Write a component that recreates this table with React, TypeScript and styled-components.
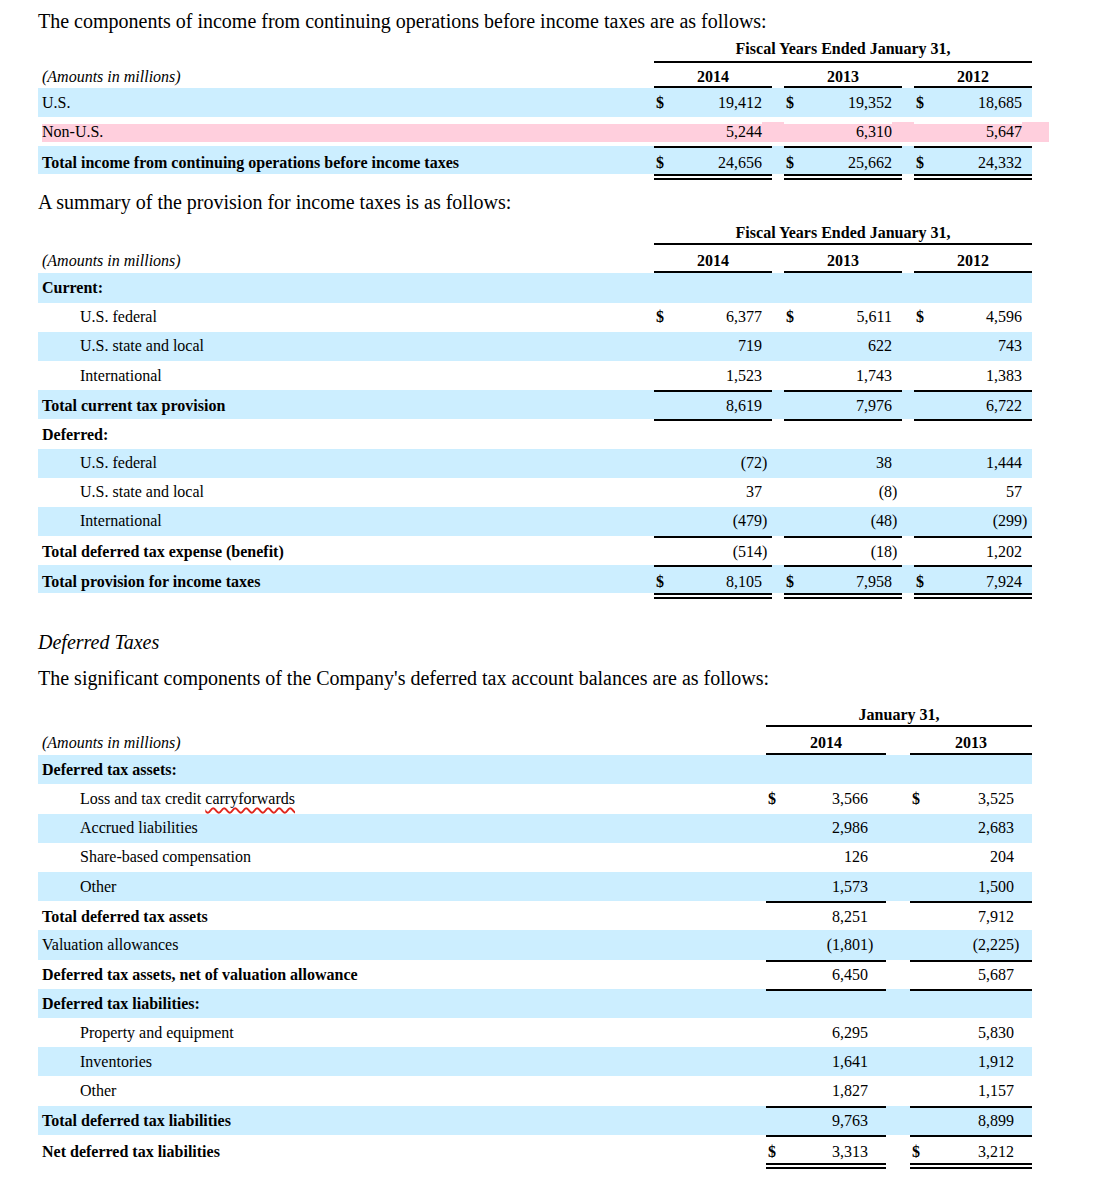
import React from 'react';
import styled, { createGlobalStyle } from 'styled-components';

const BLUE = '#CCEEFF';
const PINK = '#FFCFDD';

const GlobalStyle = createGlobalStyle`
  html, body { margin: 0; padding: 0; background: #fff; }
  body { font-family: "Liberation Serif", "Times New Roman", serif; color: #000; }
`;

const Page = styled.main`
  padding: 9px 0 18px 38px;
  width: 1080px;
`;

const Lead = styled.p<{ $top: number }>`
  margin: ${(p) => p.$top}px 0 0;
  font-size: 20px;
  line-height: 24px;
`;

const SectionTitle = styled(Lead)`
  font-style: italic;
`;

const FinTable = styled.table<{ $width: number; $top: number }>`
  border-collapse: separate;
  border-spacing: 0;
  table-layout: fixed;
  width: ${(p) => p.$width}px;
  margin-top: ${(p) => p.$top}px;
  font-size: 16px;
  line-height: 18px;
`;

const Col = styled.col<{ $w: number }>`
  width: ${(p) => p.$w}px;
`;

const Row = styled.tr<{ $h: number }>`
  height: ${(p) => p.$h}px;
`;

type Tone = 'blue' | 'white' | 'pink';
type Kind = 'label' | 'dollar' | 'value' | 'paren' | 'gap' | 'tail';

const isGroup = (k: Kind) => k === 'dollar' || k === 'value' || k === 'paren';
const isBump = (k: Kind) => k === 'gap' || k === 'tail' || k === 'paren';

const Cell = styled.td<{
  $tone: Tone;
  $kind: Kind;
  $top?: boolean;
  $double?: boolean;
  $indent?: boolean;
  $bold?: boolean;
}>`
  box-sizing: border-box;
  padding: ${(p) => (p.$double ? 4 : 0)}px 0 0;
  padding-left: ${(p) => (p.$kind === 'label' ? (p.$indent ? 42 : 4) : p.$kind === 'dollar' ? 2 : 0)}px;
  vertical-align: middle;
  white-space: nowrap;
  font-weight: ${(p) => (p.$bold || p.$kind === 'dollar' ? 700 : 400)};
  text-align: ${(p) => (p.$kind === 'value' ? 'right' : 'left')};
  border-top: ${(p) => (p.$top ? `2px solid ${isGroup(p.$kind) ? '#000' : 'transparent'}` : '0')};
  border-bottom: ${(p) => (p.$double ? `6px double ${isGroup(p.$kind) ? '#000' : 'transparent'}` : '0')};
  background-origin: border-box;
  background-clip: border-box;
  background-repeat: no-repeat;
  background-image: ${(p) => {
    if (p.$tone === 'white') return 'none';
    if (p.$kind === 'tail' && p.$tone !== 'pink') return 'none';
    const c = p.$tone === 'blue' ? BLUE : PINK;
    return `linear-gradient(${c}, ${c})`;
  }};
  background-position: ${(p) =>
    p.$tone === 'pink' ? `${p.$kind === 'label' ? 4 : 0}px ${isBump(p.$kind) ? 5 : 7}px` : '0 0'};
  background-size: ${(p) =>
    p.$tone === 'pink'
      ? `calc(100% - ${p.$kind === 'label' ? 4 : 0}px) ${isBump(p.$kind) ? 20 : 18}px`
      : `100% calc(100% - ${p.$double ? 6 : 0}px)`};
`;

const HeadCell = styled.th<{ $rule?: boolean; $pad?: number }>`
  box-sizing: border-box;
  padding: 0 0 ${(p) => p.$pad ?? 1}px;
  vertical-align: bottom;
  font-weight: 700;
  text-align: center;
  white-space: nowrap;
  border-bottom: 2px solid ${(p) => (p.$rule ? '#000' : 'transparent')};
`;

const AmountsNote = styled(HeadCell)`
  font-style: italic;
  font-weight: 400;
  text-align: left;
  padding-left: 4px;
`;

const Flagged = styled.span`
  text-decoration: underline wavy #e0261c;
  text-decoration-thickness: 1.5px;
  text-underline-offset: 3px;
  text-decoration-skip-ink: none;
`;

type Group = { dollar: number; value: number; paren: number };
type Spec = {
  label: number;
  groups: Group[];
  gap: number;
  tail?: number;
  title: string;
  years: string[];
  superH: number;
  superPad: number;
  yearH: number;
  yearPad: number;
};

type Line = {
  label: string;
  flagged?: string;
  values?: string[];
  tone: Tone;
  bold?: boolean;
  indent?: boolean;
  top?: boolean;
  double?: boolean;
  dollar?: boolean;
};

const ROW_H = 29.2;
const DOUBLE_H = 34;

function split(v?: string): [string, string] {
  if (!v) return ['', ''];
  if (v.endsWith(')')) return [v.slice(0, -1), ')'];
  return [v, ''];
}

function FinancialTable({ spec, lines, top }: { spec: Spec; lines: Line[]; top: number }) {
  const groupW = spec.groups.map((g) => g.dollar + g.value + g.paren);
  const width =
    spec.label + groupW.reduce((a, b) => a + b, 0) + spec.gap * (spec.groups.length - 1) + (spec.tail ?? 0);
  const span = spec.groups.length * 3 + (spec.groups.length - 1);

  return (
    <FinTable $width={width} $top={top}>
      <colgroup>
        <Col $w={spec.label} />
        {spec.groups.map((g, i) => (
          <React.Fragment key={i}>
            {i > 0 && <Col $w={spec.gap} />}
            <Col $w={g.dollar} />
            <Col $w={g.value} />
            <Col $w={g.paren} />
          </React.Fragment>
        ))}
        {spec.tail ? <Col $w={spec.tail} /> : null}
      </colgroup>
      <thead>
        <Row $h={spec.superH}>
          <HeadCell $pad={spec.superPad} />
          <HeadCell colSpan={span} $rule $pad={spec.superPad}>
            {spec.title}
          </HeadCell>
          {spec.tail ? <HeadCell /> : null}
        </Row>
        <Row $h={spec.yearH}>
          <AmountsNote $pad={spec.yearPad}>(Amounts in millions)</AmountsNote>
          {spec.years.map((y, i) => (
            <React.Fragment key={y}>
              {i > 0 && <HeadCell $pad={spec.yearPad} />}
              <HeadCell colSpan={3} $rule $pad={spec.yearPad}>
                {y}
              </HeadCell>
            </React.Fragment>
          ))}
          {spec.tail ? <HeadCell /> : null}
        </Row>
      </thead>
      <tbody>
        {lines.map((l, r) => {
          const common = { $tone: l.tone, $top: l.top, $double: l.double };
          return (
            <Row key={r} $h={l.double ? DOUBLE_H : ROW_H}>
              <Cell {...common} $kind="label" $indent={l.indent} $bold={l.bold}>
                {l.label}
                {l.flagged ? <Flagged>{l.flagged}</Flagged> : null}
              </Cell>
              {spec.groups.map((_, i) => {
                const [num, paren] = split(l.values?.[i]);
                return (
                  <React.Fragment key={i}>
                    {i > 0 && <Cell {...common} $kind="gap" />}
                    <Cell {...common} $kind="dollar">
                      {l.dollar ? '$' : ''}
                    </Cell>
                    <Cell {...common} $kind="value">
                      {num}
                    </Cell>
                    <Cell {...common} $kind="paren">
                      {paren}
                    </Cell>
                  </React.Fragment>
                );
              })}
              {spec.tail ? <Cell {...common} $kind="tail" /> : null}
            </Row>
          );
        })}
      </tbody>
    </FinTable>
  );
}

const threeYear: Group[] = [
  { dollar: 20, value: 88, paren: 10 },
  { dollar: 20, value: 88, paren: 10 },
  { dollar: 20, value: 88, paren: 10 },
];

const incomeSpec: Spec = {
  label: 616,
  groups: threeYear,
  gap: 12,
  tail: 17,
  title: 'Fiscal Years Ended January 31,',
  years: ['2014', '2013', '2012'],
  superH: 30,
  superPad: 3,
  yearH: 25,
  yearPad: 0,
};

const provisionSpec: Spec = {
  label: 616,
  groups: threeYear,
  gap: 12,
  title: 'Fiscal Years Ended January 31,',
  years: ['2014', '2013', '2012'],
  superH: 31,
  superPad: 1,
  yearH: 28,
  yearPad: 1,
};

const deferredSpec: Spec = {
  label: 728,
  groups: [
    { dollar: 20, value: 82, paren: 18 },
    { dollar: 20, value: 84, paren: 18 },
  ],
  gap: 24,
  title: 'January 31,',
  years: ['2014', '2013'],
  superH: 30,
  superPad: 1,
  yearH: 28,
  yearPad: 1,
};

const incomeLines: Line[] = [
  { label: 'U.S.', values: ['19,412', '19,352', '18,685'], tone: 'blue', dollar: true },
  { label: 'Non-U.S.', values: ['5,244', '6,310', '5,647'], tone: 'pink' },
  {
    label: 'Total income from continuing operations before income taxes',
    values: ['24,656', '25,662', '24,332'],
    tone: 'blue',
    bold: true,
    top: true,
    double: true,
    dollar: true,
  },
];

const provisionLines: Line[] = [
  { label: 'Current:', tone: 'blue', bold: true },
  { label: 'U.S. federal', values: ['6,377', '5,611', '4,596'], tone: 'white', indent: true, dollar: true },
  { label: 'U.S. state and local', values: ['719', '622', '743'], tone: 'blue', indent: true },
  { label: 'International', values: ['1,523', '1,743', '1,383'], tone: 'white', indent: true },
  { label: 'Total current tax provision', values: ['8,619', '7,976', '6,722'], tone: 'blue', bold: true, top: true },
  { label: 'Deferred:', tone: 'white', bold: true, top: true },
  { label: 'U.S. federal', values: ['(72)', '38', '1,444'], tone: 'blue', indent: true },
  { label: 'U.S. state and local', values: ['37', '(8)', '57'], tone: 'white', indent: true },
  { label: 'International', values: ['(479)', '(48)', '(299)'], tone: 'blue', indent: true },
  {
    label: 'Total deferred tax expense (benefit)',
    values: ['(514)', '(18)', '1,202'],
    tone: 'white',
    bold: true,
    top: true,
  },
  {
    label: 'Total provision for income taxes',
    values: ['8,105', '7,958', '7,924'],
    tone: 'blue',
    bold: true,
    top: true,
    double: true,
    dollar: true,
  },
];

const deferredLines: Line[] = [
  { label: 'Deferred tax assets:', tone: 'blue', bold: true },
  {
    label: 'Loss and tax credit ',
    flagged: 'carryforwards',
    values: ['3,566', '3,525'],
    tone: 'white',
    indent: true,
    dollar: true,
  },
  { label: 'Accrued liabilities', values: ['2,986', '2,683'], tone: 'blue', indent: true },
  { label: 'Share-based compensation', values: ['126', '204'], tone: 'white', indent: true },
  { label: 'Other', values: ['1,573', '1,500'], tone: 'blue', indent: true },
  { label: 'Total deferred tax assets', values: ['8,251', '7,912'], tone: 'white', bold: true, top: true },
  { label: 'Valuation allowances', values: ['(1,801)', '(2,225)'], tone: 'blue' },
  {
    label: 'Deferred tax assets, net of valuation allowance',
    values: ['6,450', '5,687'],
    tone: 'white',
    bold: true,
    top: true,
  },
  { label: 'Deferred tax liabilities:', tone: 'blue', bold: true, top: true },
  { label: 'Property and equipment', values: ['6,295', '5,830'], tone: 'white', indent: true },
  { label: 'Inventories', values: ['1,641', '1,912'], tone: 'blue', indent: true },
  { label: 'Other', values: ['1,827', '1,157'], tone: 'white', indent: true },
  { label: 'Total deferred tax liabilities', values: ['9,763', '8,899'], tone: 'blue', bold: true, top: true },
  {
    label: 'Net deferred tax liabilities',
    values: ['3,313', '3,212'],
    tone: 'white',
    bold: true,
    top: true,
    double: true,
    dollar: true,
  },
];

export default function App() {
  return (
    <>
      <GlobalStyle />
      <Page>
        <Lead $top={0}>The components of income from continuing operations before income taxes are as follows:</Lead>
        <FinancialTable spec={incomeSpec} lines={incomeLines} top={0} />
        <Lead $top={10}>A summary of the provision for income taxes is as follows:</Lead>
        <FinancialTable spec={provisionSpec} lines={provisionLines} top={0} />
        <SectionTitle $top={31}>Deferred Taxes</SectionTitle>
        <Lead $top={12}>The significant components of the Company's deferred tax account balances are as follows:</Lead>
        <FinancialTable spec={deferredSpec} lines={deferredLines} top={7} />
      </Page>
    </>
  );
}
